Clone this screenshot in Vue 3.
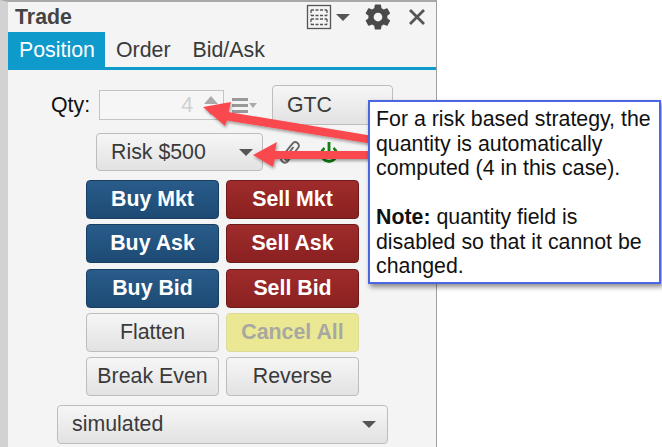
<script setup>
const orders = [
  { label: 'Buy Mkt', kind: 'buy' },
  { label: 'Sell Mkt', kind: 'sell' },
  { label: 'Buy Ask', kind: 'buy' },
  { label: 'Sell Ask', kind: 'sell' },
  { label: 'Buy Bid', kind: 'buy' },
  { label: 'Sell Bid', kind: 'sell' },
  { label: 'Flatten', kind: 'plain' },
  { label: 'Cancel All', kind: 'cancel' },
  { label: 'Break Even', kind: 'plain' },
  { label: 'Reverse', kind: 'plain' },
];
</script>

<template>
  <div class="page">
    <div class="panel">
      <div class="title-bar">
        <span class="title">Trade</span>
        <div class="tools">
          <svg class="layout-icon" width="26" height="26" viewBox="0 0 26 26">
            <rect x="1.500" y="1.500" width="23" height="23" fill="none" stroke="#555" stroke-width="1.300" />
            <path d="M5 6h16M5 11.500h16M5 15h16M5 20.500h16M5 6v5.500M21 6v5.500M5 15v5.500M21 15v5.500" fill="none"
              stroke="#555" stroke-width="1.300" stroke-dasharray="3 1.500" />
          </svg>
          <span class="caret caret-title"></span>
          <svg class="gear" width="30" height="30" viewBox="0 0 24 24">
            <path fill="#4a4a4a"
              d="M19.400 13c.1-.3.1-.7.1-1s0-.7-.1-1l2.100-1.600c.2-.2.2-.4.1-.6l-2-3.500c-.1-.2-.4-.3-.6-.2l-2.500 1c-.5-.4-1.100-.7-1.700-1l-.4-2.600c0-.3-.2-.5-.5-.5h-4c-.3 0-.5.2-.5.4l-.4 2.700c-.6.2-1.200.6-1.700 1l-2.500-1c-.2-.1-.5 0-.6.2l-2 3.500c-.1.2-.1.5.1.6L4.400 11c0 .3-.1.7-.1 1s0 .7.1 1l-2.100 1.600c-.2.2-.2.4-.1.6l2 3.500c.1.2.4.3.6.2l2.500-1c.5.4 1.100.7 1.700 1l.4 2.600c0 .3.2.5.5.5h4c.3 0 .5-.2.5-.4l.4-2.700c.6-.2 1.200-.6 1.700-1l2.500 1c.2.1.5 0 .6-.2l2-3.500c.1-.2.1-.5-.1-.6L19.400 13zM12 15.500c-1.900 0-3.500-1.600-3.500-3.500s1.600-3.500 3.500-3.500 3.500 1.600 3.500 3.500-1.600 3.500-3.500 3.500z" />
          </svg>
          <svg class="close" width="18" height="18" viewBox="0 0 18 18">
            <path d="M2 2l14 14M16 2L2 16" stroke="#555" stroke-width="2.800" fill="none" />
          </svg>
        </div>
      </div>

      <div class="tabs">
        <div class="tab active">Position</div>
        <div class="tab">Order</div>
        <div class="tab">Bid/Ask</div>
      </div>

      <div class="qty-row">
        <label class="qty-label">Qty:</label>
        <div class="qty-input">
          <span class="qty-value">4</span>
          <div class="stepper">
            <span class="step up"></span>
            <span class="step down"></span>
          </div>
        </div>
        <div class="menu-icon">
          <span class="bars"><i></i><i></i><i></i></span>
          <span class="caret caret-small"></span>
        </div>
        <button class="btn gtc">GTC</button>
      </div>

      <div class="risk-row">
        <button class="btn risk">
          <span>Risk $500</span>
          <span class="caret"></span>
        </button>
        <svg class="clip" width="24" height="26" viewBox="0 0 24 26">
          <path d="M15.500 8 7.500 18c-1.500 2 1.500 4.500 3.200 2.500L20 9c3-3.800-2.500-8-5.500-4.300L4 17.500C1 21.500 6.500 26 10 22l6-7.500"
            fill="none" stroke="#666" stroke-width="1.900" />
        </svg>
        <svg class="power" width="22" height="22" viewBox="0 0 22 22">
          <path d="M6.500 7a7.500 7.500 0 1 0 9 0" fill="none" stroke="#118011" stroke-width="2.800" />
          <path d="M11 1v10" stroke="#118011" stroke-width="2.800" />
        </svg>
      </div>

      <div class="order-grid">
        <button v-for="o in orders" :key="o.label" class="btn order" :class="o.kind">{{ o.label }}</button>
      </div>

      <div class="account-row">
        <button class="btn account">
          <span>simulated</span>
          <span class="caret"></span>
        </button>
      </div>
    </div>

    <svg class="arrows" width="662" height="447" viewBox="0 0 662 447">
      <defs>
        <filter id="arrow-shadow" x="-10%" y="-30%" width="120%" height="170%">
          <feDropShadow dx="1" dy="2" stdDeviation="1.500" flood-color="#000" flood-opacity=".35" />
        </filter>
      </defs>
      <g fill="#f94a50" filter="url(#arrow-shadow)">
        <path d="M203 107 231 102 228.500 112 370 135.500 370 143.500 227 120.500 225 126z" />
        <path d="M253 155 277 142 275 151 370 151 370 159 275 159 273 167z" />
      </g>
    </svg>

    <div class="note">
      <p>For a risk based strategy, the quantity is automatically computed (4 in this case).</p>
      <p><b>Note:</b> quantity field is disabled so that it cannot be changed.</p>
    </div>
  </div>
</template>

<style>
html,
body {
  margin: 0;
  background: #fff;
}
</style>

<style scoped>
.page {
  position: relative;
  width: 662px;
  height: 447px;
  overflow: hidden;
  font-family: "Liberation Sans", Arial, sans-serif;
  background: #fff;
}

.panel {
  width: 437px;
  height: 447px;
  box-sizing: border-box;
  border-left: 8px solid #d2d2d2;
  border-top: 2px solid #a8a8a8;
  border-right: 1px solid #a0a0a0;
  background: #f4f4f4;
  color: #3a3a3a;
}

.title-bar {
  display: flex;
  align-items: center;
  justify-content: space-between;
  height: 30px;
  padding: 0 10px 0 7px;
}

.title {
  font-size: 21.330px;
  font-weight: bold;
  color: #444;
}

.tools {
  display: flex;
  align-items: center;
}

.layout-icon {
  margin-right: 4px;
}

.gear {
  margin: 0 15px 0 13px;
}

.caret {
  display: inline-block;
  width: 0;
  height: 0;
  border-left: 7px solid transparent;
  border-right: 7px solid transparent;
  border-top: 7px solid #555;
}

.tabs {
  display: flex;
  height: 35px;
  border-bottom: 3px solid #0e9acb;
}

.tab {
  padding: 2px 11px 0;
  font-size: 21.330px;
  line-height: 33px;
  color: #3a3a3a;
}

.tab.active {
  width: 97px;
  box-sizing: border-box;
  background: #0e9acb;
  color: #fff;
}

.qty-row {
  display: flex;
  align-items: center;
  height: 40px;
  margin-top: 15px;
  padding-left: 43px;
}

.qty-label {
  width: 48px;
  font-size: 21.330px;
  color: #111;
}

.qty-input {
  display: flex;
  align-items: center;
  justify-content: flex-end;
  box-sizing: border-box;
  width: 125px;
  height: 30px;
  border: 1px solid #c4c4c4;
  background: #f6f6f6;
}

.qty-value {
  margin-right: 11px;
  font-size: 21.330px;
  color: #d0d0d0;
}

.stepper {
  display: flex;
  flex-direction: column;
  gap: 3px;
  margin-right: 5px;
}

.step {
  width: 0;
  height: 0;
  border-left: 7px solid transparent;
  border-right: 7px solid transparent;
}

.step.up {
  border-bottom: 8px solid #aaa;
}

.step.down {
  border-top: 8px solid #aaa;
}

.menu-icon {
  display: flex;
  align-items: center;
  gap: 1px;
  width: 40px;
  margin-left: 8px;
}

.bars {
  display: flex;
  flex-direction: column;
  gap: 3px;
  width: 16px;
}

.bars i {
  height: 3px;
  background: #999;
}

.caret-small {
  border-left-width: 4px;
  border-right-width: 4px;
  border-top: 5px solid #aaa;
}

.btn {
  box-sizing: border-box;
  border: 1px solid #bdbdbd;
  border-radius: 4px;
  background: linear-gradient(#f6f6f6, #e2e2e2);
  color: #3a3a3a;
  font-family: inherit;
  font-size: 21.330px;
  padding: 0;
}

.gtc {
  width: 121px;
  height: 40px;
  text-align: left;
  padding-left: 14px;
}

.risk-row {
  display: flex;
  align-items: center;
  height: 38px;
  margin-top: 8px;
  padding-left: 88px;
}

.risk {
  display: flex;
  align-items: center;
  justify-content: space-between;
  width: 167px;
  height: 38px;
  padding: 0 9px 0 14px;
}

.clip {
  margin-left: 15px;
}

.power {
  margin-left: 16px;
}

.order-grid {
  display: grid;
  grid-template-columns: 133px 133px;
  grid-auto-rows: 39px;
  gap: 5.300px 7px;
  margin-top: 9px;
  padding-left: 78px;
}

.order.buy,
.order.sell {
  color: #fff;
  font-weight: bold;
}

.order.buy {
  border-color: #173f63;
  background: linear-gradient(#2a5c8a, #1c4a74);
}

.order.sell {
  border-color: #6f1a1a;
  background: linear-gradient(#a02c2c, #8a2020);
}

.order.cancel {
  border-color: #dcdc98;
  background: #ebe894;
  color: #a8a8a0;
  font-weight: bold;
}

.account-row {
  margin-top: 9px;
  padding-left: 49px;
}

.account {
  display: flex;
  align-items: center;
  justify-content: space-between;
  width: 331px;
  height: 39px;
  padding: 0 11px 0 14px;
}

.arrows {
  position: absolute;
  inset: 0;
  pointer-events: none;
}

.note {
  position: absolute;
  left: 368px;
  top: 100px;
  box-sizing: border-box;
  width: 293px;
  height: 184px;
  padding: 5px 6px 0 6px;
  border: 2px solid #4a66e0;
  background: #fff;
  box-shadow: 2px 3px 5px rgba(0, 0, 0, 0.45);
  color: #111;
  font-size: 21.330px;
  line-height: 24.500px;
}

.note p {
  margin: 0 0 24.500px;
}
</style>
